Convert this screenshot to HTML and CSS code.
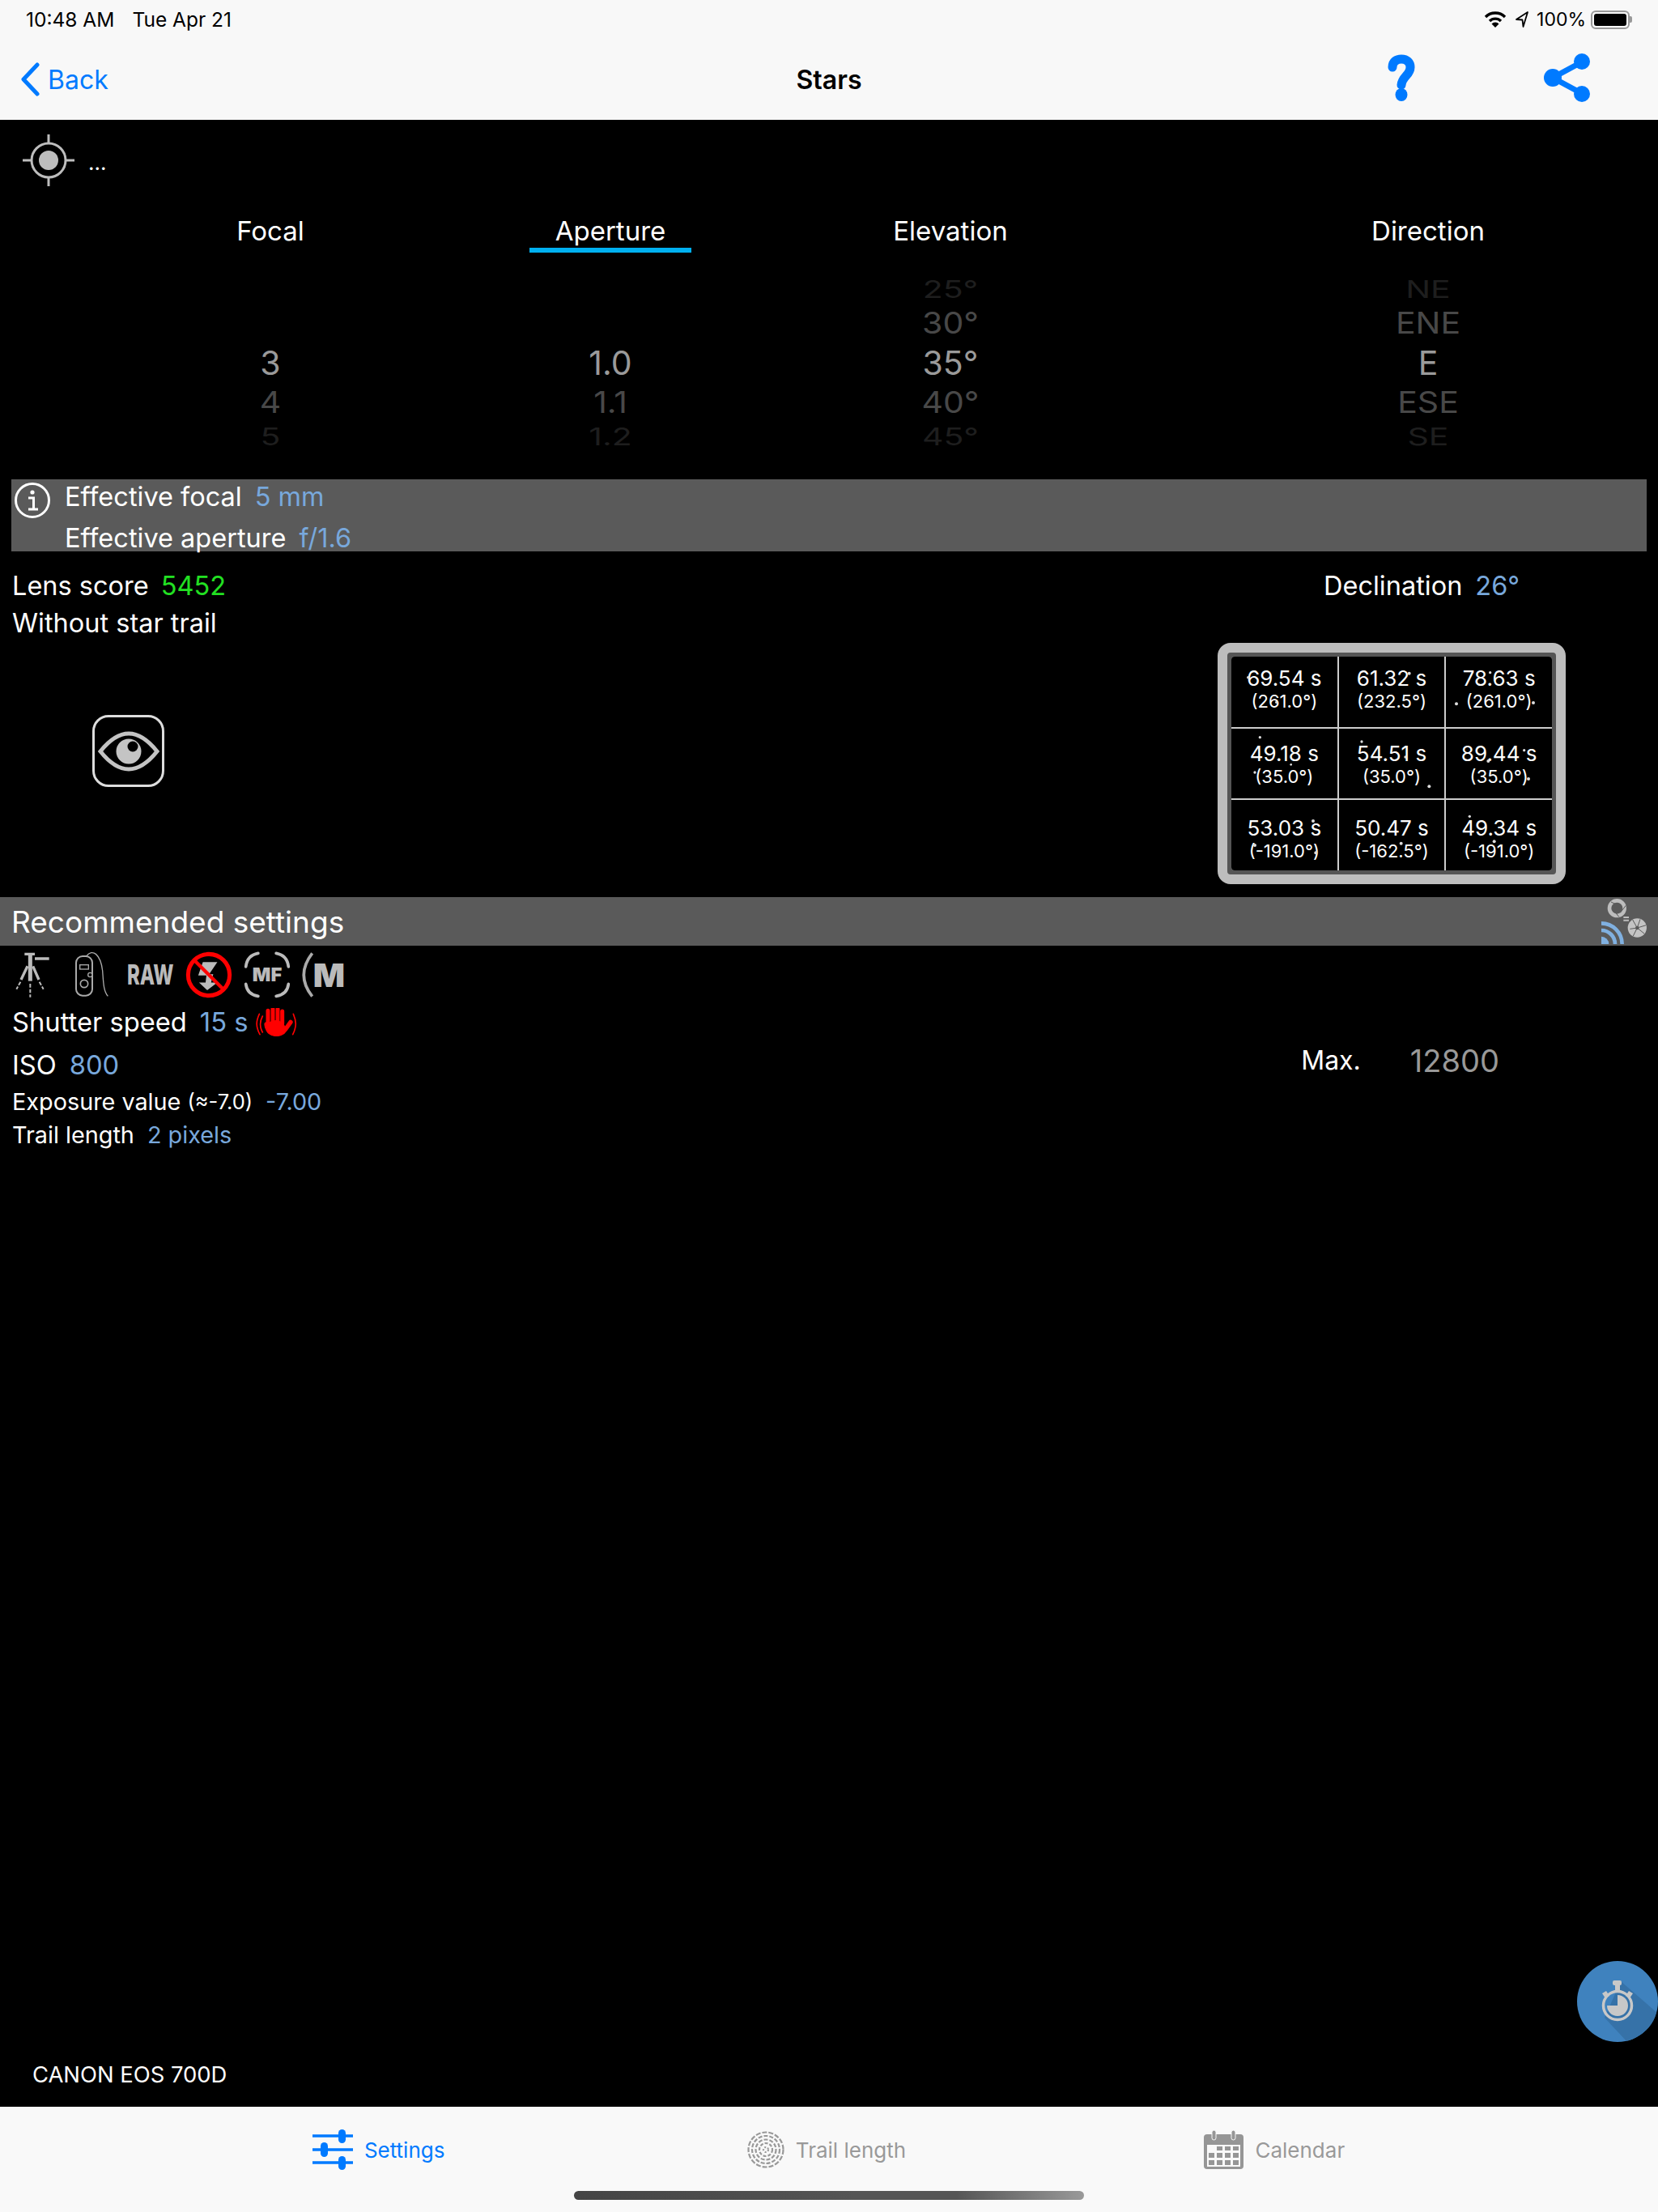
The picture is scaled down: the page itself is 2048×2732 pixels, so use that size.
FILE: index.html
```html
<!DOCTYPE html>
<html lang="en">
<head>
    <meta charset="UTF-8">
    <meta name="viewport" content="width=device-width, initial-scale=1.0">
    <title>Stars</title>
    <link rel="stylesheet" href="styles.css">
</head>
<body>
    <header class="top-bars">
        <div class="status-bar">
            <span class="status-time">10:48 AM</span>
            <span class="status-date">Tue Apr 21</span>
            <svg class="status-wifi" width="28" height="22" viewBox="0 0 28 22">
                <path d="M2 8 A17 17 0 0 1 26 8" fill="none" stroke="#000" stroke-width="3.4"/>
                <path d="M7 13 A10 10 0 0 1 21 13" fill="none" stroke="#000" stroke-width="3.4"/>
                <path d="M14 21 L9.5 16.5 A6 6 0 0 1 18.5 16.5 Z" fill="#000"/>
            </svg>
            <svg class="status-arrow" width="18" height="22" viewBox="0 0 18 22">
                <path d="M16 2 L2 11 L9.5 11.5 L10.5 20 Z" fill="none" stroke="#000" stroke-width="1.8" stroke-linejoin="round"/>
            </svg>
            <span class="status-percent">100%</span>
            <div class="battery"><div class="battery-level"></div></div>
            <div class="battery-tip"></div>
        </div>
        <nav class="nav-bar">
            <a class="nav-back" href="#">
                <svg width="26" height="42" viewBox="0 0 26 42">
                    <path d="M22 3 L5 21 L22 39" fill="none" stroke="#007aff" stroke-width="5" stroke-linecap="round" stroke-linejoin="round"/>
                </svg>
                <span>Back</span>
            </a>
            <h1 class="nav-title">Stars</h1>
            <svg class="nav-help" width="36" height="58" viewBox="0 0 36 58">
                <path d="M7 16 C7 9 12 6 18 6 C25 6 29 10 29 16 C29 26 19 27 18 38" fill="none" stroke="#007aff" stroke-width="11" stroke-linecap="round"/>
                <ellipse cx="18" cy="50" rx="7.5" ry="8" fill="#007aff"/>
            </svg>
            <svg class="nav-share" width="58" height="60" viewBox="0 0 58 60">
                <path d="M48 10 L11 30 L48 50" fill="none" stroke="#007aff" stroke-width="7"/>
                <circle cx="47" cy="10" r="10" fill="#007aff"/>
                <circle cx="11" cy="30" r="11" fill="#007aff"/>
                <circle cx="47" cy="50" r="10" fill="#007aff"/>
            </svg>
        </nav>
    </header>

    <main class="content">
        <div class="location-row">
            <svg width="64" height="64" viewBox="0 0 64 64">
                <circle cx="32" cy="32" r="21" fill="none" stroke="#bdbdbd" stroke-width="3"/>
                <circle cx="32" cy="32" r="12" fill="#bdbdbd"/>
                <path d="M32 0 V10 M32 54 V64 M0 32 H10 M54 32 H64" stroke="#bdbdbd" stroke-width="3"/>
            </svg>
            <span class="location-name">...</span>
        </div>

        <div class="param-tabs">
            <div class="param-tab">Focal</div>
            <div class="param-tab param-tab-active">Aperture</div>
            <div class="param-tab">Elevation</div>
            <div class="param-tab">Direction</div>
        </div>

        <div class="wheels">
            <div class="wheel">
                <div class="wheel-item"></div>
                <div class="wheel-item"></div>
                <div class="wheel-item wheel-current">3</div>
                <div class="wheel-item wheel-near">4</div>
                <div class="wheel-item wheel-far">5</div>
            </div>
            <div class="wheel">
                <div class="wheel-item"></div>
                <div class="wheel-item"></div>
                <div class="wheel-item wheel-current">1.0</div>
                <div class="wheel-item wheel-near">1.1</div>
                <div class="wheel-item wheel-far">1.2</div>
            </div>
            <div class="wheel">
                <div class="wheel-item wheel-far">25°</div>
                <div class="wheel-item wheel-near">30°</div>
                <div class="wheel-item wheel-current">35°</div>
                <div class="wheel-item wheel-near">40°</div>
                <div class="wheel-item wheel-far">45°</div>
            </div>
            <div class="wheel">
                <div class="wheel-item wheel-far">NE</div>
                <div class="wheel-item wheel-near">ENE</div>
                <div class="wheel-item wheel-current">E</div>
                <div class="wheel-item wheel-near">ESE</div>
                <div class="wheel-item wheel-far">SE</div>
            </div>
        </div>

        <section class="effective-bar">
            <svg class="effective-icon" width="46" height="46" viewBox="0 0 46 46">
                <circle cx="23" cy="23" r="20.5" fill="none" stroke="#fff" stroke-width="3"/>
                <circle cx="23" cy="13" r="2.6" fill="#fff"/>
                <path d="M18 20 H24.5 V33 M18 34 H30" fill="none" stroke="#fff" stroke-width="3"/>
            </svg>
            <div class="effective-lines">
                <div class="effective-line">Effective focal<span class="value">5 mm</span></div>
                <div class="effective-line">Effective aperture<span class="value">f/1.6</span></div>
            </div>
        </section>

        <section class="results">
            <div class="results-left">
                <div class="result-line">Lens score<span class="value value-good">5452</span></div>
                <div class="result-line">Without star trail</div>
                <button class="eye-button">
                    <svg width="83" height="83" viewBox="3 3 83 83">
                        <path d="M10 45 C22 30 33 23 45 23 C57 23 68 30 80 45 C68 60 57 67 45 67 C33 67 22 60 10 45 Z" fill="none" stroke="#c4c4c4" stroke-width="5"/>
                        <circle cx="45" cy="45" r="15.5" fill="#c4c4c4"/>
                        <circle cx="50" cy="39" r="6.5" fill="#000"/>
                    </svg>
                </button>
            </div>
            <div class="results-right">
                <div class="result-line declination">Declination<span class="value">26°</span></div>
                <div class="exposure-frame">
                    <div class="exposure-grid">
                        <div class="exposure-cell"><b>69.54 s</b><small>(261.0°)</small></div>
                        <div class="exposure-cell"><b>61.32 s</b><small>(232.5°)</small></div>
                        <div class="exposure-cell"><b>78.63 s</b><small>(261.0°)</small></div>
                        <div class="exposure-cell"><b>49.18 s</b><small>(35.0°)</small></div>
                        <div class="exposure-cell"><b>54.51 s</b><small>(35.0°)</small></div>
                        <div class="exposure-cell"><b>89.44 s</b><small>(35.0°)</small></div>
                        <div class="exposure-cell"><b>53.03 s</b><small>(-191.0°)</small></div>
                        <div class="exposure-cell"><b>50.47 s</b><small>(-162.5°)</small></div>
                        <div class="exposure-cell"><b>49.34 s</b><small>(-191.0°)</small></div>
                    </div>
                    <!-- stars showing through the grid -->
                    <svg class="exposure-stars" viewBox="72 42 1290 894" fill="#ddd">
                        <circle cx="185" cy="170" r="5"/><circle cx="290" cy="262" r="5"/>
                        <circle cx="782" cy="155" r="6"/><circle cx="1082" cy="152" r="5"/>
                        <circle cx="957" cy="268" r="6"/><circle cx="1242" cy="264" r="6"/>
                        <circle cx="229" cy="392" r="5"/><circle cx="606" cy="408" r="5"/>
                        <circle cx="344" cy="493" r="4"/><circle cx="210" cy="522" r="5"/>
                        <circle cx="768" cy="465" r="5"/><circle cx="856" cy="574" r="6"/>
                        <circle cx="1208" cy="440" r="5"/><circle cx="1075" cy="480" r="6"/>
                        <circle cx="1224" cy="546" r="6"/><circle cx="426" cy="702" r="6"/>
                        <circle cx="210" cy="792" r="6"/><circle cx="436" cy="820" r="6"/>
                        <circle cx="636" cy="715" r="4"/><circle cx="752" cy="785" r="6"/>
                        <circle cx="1006" cy="685" r="5"/><circle cx="1097" cy="778" r="6"/>
                    </svg>
                </div>
            </div>
        </section>

        <section class="settings-header">
            <h2>Recommended settings</h2>
            <svg class="settings-status" width="70" height="60" viewBox="234 54 210 180">
                <circle cx="292" cy="95" r="28" fill="none" stroke="#bdbdbd" stroke-width="14"/>
                <path d="M270 72 L300 86 M325 85 L304 112 M300 128 L276 98" stroke="#5a5a5a" stroke-width="3"/>
                <path d="M316 129 H336 M316 140 H336" stroke="#bdbdbd" stroke-width="6"/>
                <circle cx="367" cy="168" r="35" fill="#c4c4c4"/>
                <path d="M367 168 L350 138 M367 168 L400 158 M367 168 L352 198 M367 168 L394 190 M367 168 L340 172 M367 168 L378 136" stroke="#5a5a5a" stroke-width="3"/>
                <circle cx="367" cy="168" r="7" fill="#5a5a5a"/>
                <path d="M234 228 V200 A28 28 0 0 1 262 228 Z" fill="#80b0e0"/>
                <path d="M234 177 A51 51 0 0 1 285 228 M234 151 A77 77 0 0 1 311 228" fill="none" stroke="#80b0e0" stroke-width="14"/>
            </svg>
        </section>

        <div class="mode-icons">
            <svg width="45" height="58" viewBox="60 225 135 174">
                <path d="M97 235 H135 M135 252 H188" stroke="#bbb" stroke-width="10"/>
                <path d="M118 238 V335" stroke="#bbb" stroke-width="15"/>
                <path d="M108 280 L84 330 M128 280 L150 330" stroke="#bbb" stroke-width="10"/>
                <path d="M82 338 L67 365 M152 338 L167 365 M118 345 V395" stroke="#bbb" stroke-width="6" stroke-dasharray="14 6"/>
            </svg>
            <svg class="mode-remote" width="44" height="57" viewBox="275 228 132 171">
                <rect x="284" y="246" width="60" height="146" rx="24" fill="none" stroke="#aaa" stroke-width="6"/>
                <rect x="298" y="278" width="32" height="16" fill="none" stroke="#aaa" stroke-width="4"/>
                <circle cx="314" cy="348" r="14" fill="none" stroke="#aaa" stroke-width="5"/>
                <circle cx="336" cy="315" r="8" fill="#000" stroke="#aaa" stroke-width="4"/>
                <path d="M322 246 C345 215 375 240 382 300 C385 340 385 375 402 394" fill="none" stroke="#aaa" stroke-width="4"/>
            </svg>
            <span class="raw-label">RAW</span>
            <svg width="58" height="58" viewBox="688 226 172 172">
                <path d="M805 265 H752 L735 314 H765 L762 340 H738 L768 368 L805 340 H782 L790 310 H775 Z" fill="#bbb"/>
                <circle cx="774" cy="312" r="76" fill="none" stroke="#f00" stroke-width="15"/>
                <path d="M720 258 L828 366" stroke="#f00" stroke-width="13"/>
            </svg>
            <svg class="mode-focus" width="58" height="58" viewBox="904 226 172 172">
                <g fill="none" stroke="#bbb" stroke-width="11" stroke-linecap="round">
                    <path d="M912 282 C915 255 930 238 957 233"/>
                    <path d="M1023 233 C1050 238 1065 255 1068 282"/>
                    <path d="M912 346 C915 370 930 386 957 390"/>
                    <path d="M1023 390 C1050 386 1065 370 1068 346"/>
                </g>
                <text class="mode-text" x="990" y="336" text-anchor="middle" font-size="68" textLength="108" lengthAdjust="spacingAndGlyphs">MF</text>
            </svg>
            <svg class="mode-manual" width="54" height="58" viewBox="1118 226 162 172">
                <path d="M1156 232 C1115 285 1115 340 1156 392" fill="none" stroke="#aaa" stroke-width="11"/>
                <text class="mode-text" x="1218" y="357" text-anchor="middle" font-size="120" textLength="118" lengthAdjust="spacingAndGlyphs">M</text>
            </svg>
        </div>

        <section class="exposure-values">
            <div class="setting-line">Shutter speed<span class="value">15 s</span>
                <svg class="shake-icon" width="52" height="38" viewBox="0 0 156 114">
                    <g stroke="#f00" stroke-linecap="round" fill="none">
                        <path d="M48 10 V58 M66 4 V54 M84 4 V54 M101 12 V58" stroke-width="15"/>
                        <path d="M42 60 C45 100 95 108 112 80 L132 52" stroke-width="16"/>
                        <path d="M16 22 C3 50 3 70 18 98 M28 30 C17 50 17 70 28 90 M142 22 C154 50 154 70 140 98" stroke-width="5"/>
                    </g>
                    <ellipse cx="76" cy="75" rx="36" ry="30" fill="#f00"/>
                </svg>
            </div>
            <div class="setting-line setting-line-iso">ISO<span class="value">800</span>
                <div class="iso-max">Max.<span class="iso-max-value">12800</span></div>
            </div>
            <div class="setting-line setting-line-small">Exposure value<small class="approx">(≈-7.0)</small><span class="value">-7.00</span></div>
            <div class="setting-line setting-line-small setting-line-trail">Trail length<span class="value">2 pixels</span></div>
        </section>

        <div class="camera-name">CANON EOS 700D</div>

        <button class="timer-button">
            <svg width="100" height="100" viewBox="0 0 100 100">
                <path d="M54 25 L100 65 L100 100 L62 100 L34 70 Z" fill="#3672a8"/>
                <g fill="#c8c8c8">
                    <rect x="44" y="24" width="11" height="6" rx="2"/>
                    <rect x="47" y="30" width="6" height="7"/>
                    <path d="M31 40 L36 37 L40 43 L35 46 Z M69 40 L64 37 L60 43 L65 46 Z"/>
                    <path d="M50 42 A13 13 0 1 1 37 55 H50 Z"/>
                </g>
                <circle cx="50" cy="55" r="17.5" fill="none" stroke="#c8c8c8" stroke-width="3.5"/>
            </svg>
        </button>
    </main>

    <footer class="tab-bar">
        <div class="tabs">
            <a class="tab tab-active" href="#">
                <svg width="50" height="50" viewBox="0 0 50 50">
                    <path d="M0 8 H50 M0 25 H50 M0 41 H50" stroke="#007aff" stroke-width="3.5"/>
                    <rect x="32" y="0" width="9" height="17" rx="4.5" fill="#007aff"/>
                    <rect x="10" y="16" width="9" height="18" rx="4.5" fill="#007aff"/>
                    <rect x="32" y="33" width="9" height="17" rx="4.5" fill="#007aff"/>
                </svg>
                <span>Settings</span>
            </a>
            <a class="tab" href="#">
                <svg width="46" height="46" viewBox="0 0 46 46" fill="none" stroke="#999" stroke-width="2.2">
                    <circle cx="23" cy="23" r="21.5" stroke-dasharray="6 2"/>
                    <circle cx="23" cy="23" r="17" stroke-dasharray="5 2"/>
                    <circle cx="23" cy="23" r="12.5" stroke-dasharray="5 2"/>
                    <circle cx="23" cy="23" r="8" stroke-dasharray="4 2"/>
                    <circle cx="23" cy="23" r="3" stroke-dasharray="2 2"/>
                </svg>
                <span>Trail length</span>
            </a>
            <a class="tab" href="#">
                <svg width="49" height="48" viewBox="0 0 49 48">
                    <rect x="0" y="5" width="49" height="43" rx="4" fill="#969696"/>
                    <rect x="4" y="18" width="41" height="27" fill="#f9f9f9"/>
                    <rect x="10" y="0" width="5" height="12" rx="2.5" fill="#969696" stroke="#f9f9f9"/>
                    <rect x="34" y="0" width="5" height="12" rx="2.5" fill="#969696" stroke="#f9f9f9"/>
                    <g fill="#969696">
                        <rect x="16" y="20" width="7" height="5"/><rect x="26" y="20" width="7" height="5"/><rect x="36" y="20" width="7" height="5"/>
                        <rect x="6" y="28" width="7" height="6"/><rect x="16" y="28" width="7" height="6"/><rect x="26" y="28" width="7" height="6"/><rect x="36" y="28" width="7" height="6"/>
                        <rect x="6" y="37" width="7" height="6"/><rect x="16" y="37" width="7" height="6"/><rect x="26" y="37" width="7" height="6"/><rect x="36" y="37" width="7" height="6"/>
                    </g>
                </svg>
                <span>Calendar</span>
            </a>
        </div>
        <div class="home-indicator"></div>
    </footer>
</body>
</html>
```

FILE: styles.css
```css
* {
    box-sizing: border-box;
}

body {
    margin: 0;
    width: 2048px;
    height: 2732px;
    display: flex;
    flex-direction: column;
    overflow: hidden;
    background: #000;
    color: #fff;
    font-family: Inter, "Noto Sans", sans-serif;
}

/* top bars */
.top-bars {
    background: #f8f8f8;
    color: #000;
}

.status-bar {
    height: 48px;
    padding: 0 32px 0 32px;
    display: flex;
    align-items: center;
    font-size: 24.5px;
}

.status-date {
    margin-left: 22px;
    margin-right: auto;
}

.status-arrow {
    margin-left: 10px;
}

.status-percent {
    margin-left: 9px;
    font-size: 23px;
}

.battery {
    width: 48px;
    height: 23px;
    margin-left: 6px;
    padding: 2px;
    border: 2px solid #999;
    border-radius: 6px;
}

.battery-level {
    height: 100%;
    background: #000;
    border-radius: 3px;
}

.battery-tip {
    width: 3px;
    height: 8px;
    background: #999;
    border-radius: 0 2px 2px 0;
}

.nav-bar {
    height: 100px;
    display: flex;
    align-items: center;
    padding-left: 24px;
}

.nav-back {
    width: 939px;
    display: flex;
    align-items: center;
    gap: 9px;
    color: #007aff;
    font-size: 32px;
    text-decoration: none;
}

.nav-title {
    width: 122px;
    margin: 0;
    font-size: 32px;
    font-weight: 600;
    text-align: center;
}

.nav-help {
    margin-left: 628px;
    margin-top: -4px;
}

.nav-share {
    margin-left: 158px;
    margin-top: -4px;
}

/* main */
.content {
    position: relative;
    flex: 1;
    display: flex;
    flex-direction: column;
}

.location-row {
    height: 114px;
    padding: 18px 0 0 28px;
    display: flex;
    align-items: flex-start;
}

.location-name {
    margin: 19px 0 0 17px;
    font-size: 26px;
}

.param-tabs,
.wheels {
    display: grid;
    grid-template-columns: 640px 200px 640px 540px;
    padding-left: 14px;
}

.param-tab {
    height: 50px;
    font-size: 33px;
    line-height: 47px;
    text-align: center;
}

.param-tab-active {
    border-bottom: 6px solid #00b0f0;
}

.wheels {
    margin-top: 27px;
}

.wheel {
    display: grid;
    grid-template-rows: 36px 48px 50px 48px 36px;
}

.wheel-item {
    font-size: 41px;
    line-height: 1;
    display: flex;
    align-items: center;
    justify-content: center;
    color: #9a9a9a;
}

.wheel-near {
    color: #484848;
    transform: scaleY(0.9);
}

.wheel-far {
    color: #1e1e1e;
    transform: scaleY(0.72);
}

.effective-bar {
    height: 89px;
    margin: 35px 14px 0;
    padding-left: 3px;
    display: flex;
    background: #5a5a5a;
    font-size: 32.5px;
}

.effective-icon {
    margin: 3px 0 0 0;
}

.effective-lines {
    margin-left: 17px;
}

.effective-line {
    height: 50px;
    line-height: 44px;
}

.effective-line + .effective-line {
    height: 39px;
    line-height: 45px;
}

.value {
    margin-left: 16px;
    color: #78a8dc;
}

.value-good {
    margin-left: 15px;
    color: #22e022;
}

.results {
    height: 427px;
    display: flex;
    justify-content: space-between;
    padding: 19px 114px 0 15px;
}

.result-line {
    height: 46px;
    font-size: 32.5px;
    line-height: 47px;
}

.eye-button {
    display: block;
    width: 89px;
    height: 89px;
    margin: 91px 0 0 99px;
    padding: 0;
    background: #000;
    border: 3px solid #ddd;
    border-radius: 20px;
}

.eye-button svg {
    display: block;
}

.results-right {
    width: 430px;
}

.declination {
    padding-left: 131px;
    white-space: nowrap;
}

.exposure-frame {
    position: relative;
    height: 298px;
    margin-top: 48px;
    padding: 5px;
    background: #555;
    border: 12px solid #bdbdbd;
    border-radius: 16px;
}

.exposure-grid {
    height: 100%;
    display: grid;
    grid-template-columns: repeat(3, 1fr);
    grid-template-rows: repeat(3, 1fr);
    gap: 2px;
    background: #ccc;
    border-radius: 4px;
    overflow: hidden;
}

.exposure-cell {
    display: flex;
    flex-direction: column;
    align-items: center;
    justify-content: center;
    background: #000;
}

.exposure-cell:nth-child(-n+3) {
    padding-bottom: 4px;
}

.exposure-cell:nth-child(n+4) {
    padding-top: 4px;
}

.exposure-cell:nth-child(n+7) {
    padding-top: 10px;
}

.exposure-cell b {
    font-size: 26px;
    font-weight: 400;
    line-height: 28px;
}

.exposure-cell small {
    font-size: 22px;
    line-height: 28px;
}

.exposure-stars {
    position: absolute;
    top: -12px;
    left: -12px;
    width: 430px;
    height: 298px;
}

.settings-header {
    height: 60px;
    display: flex;
    justify-content: space-between;
    align-items: center;
    padding-left: 14px;
    background: #5a5a5a;
}

.settings-header h2 {
    margin: 0;
    font-size: 37px;
    font-weight: 400;
}

.mode-icons {
    height: 68px;
    padding: 7px 0 0 18px;
    display: flex;
    align-items: flex-start;
    gap: 0;
}

.mode-icons svg + svg {
    margin-left: 16px;
}

.mode-icons .mode-remote {
    margin-left: 28px;
}

.mode-icons .mode-focus {
    margin-left: 14px;
}

.mode-icons .mode-manual {
    margin-left: 14px;
}

.mode-icons .raw-label + svg {
    margin-left: 16px;
}

.raw-label {
    width: 56px;
    margin: 11px 0 0 22px;
    font-size: 34px;
    font-weight: 800;
    line-height: 36px;
    color: #bbb;
    transform: scaleX(0.7);
    transform-origin: left;
}

.mode-text {
    fill: #bbb;
    font-weight: 900;
    font-family: Inter, sans-serif;
}

.exposure-values {
    padding-left: 15px;
}

.setting-line {
    height: 52px;
    display: flex;
    align-items: center;
    font-size: 32.7px;
}

.shake-icon {
    margin: 4px 0 0 9px;
}

.setting-line-iso {
    height: 53px;
}

.iso-max {
    margin: -10px 0 0 1460px;
    display: flex;
    align-items: center;
    font-size: 32px;
}

.iso-max-value {
    margin-left: 61px;
    color: #999;
    font-size: 38px;
}

.setting-line-small {
    height: 38px;
    font-size: 28.8px;
}

.setting-line-trail {
    height: 45px;
}

.approx {
    margin-left: 8px;
    font-size: 25.5px;
}

.camera-name {
    margin: auto 0 23px 40px;
    font-size: 27.4px;
}

.timer-button {
    position: absolute;
    right: 0;
    bottom: 80px;
    width: 100px;
    height: 100px;
    padding: 0;
    overflow: hidden;
    background: #3f82be;
    border: 0;
    border-radius: 50%;
}

.timer-button svg {
    display: block;
}

/* tab bar */
.tab-bar {
    height: 130px;
    background: #f9f9f9;
}

.tabs {
    height: 104px;
    padding: 2px 197px 0 191px;
    display: grid;
    grid-template-columns: repeat(3, 1fr);
}

.tab {
    display: flex;
    align-items: center;
    justify-content: center;
    gap: 14px;
    color: #999;
    font-size: 26px;
    text-decoration: none;
}

.tab-active {
    color: #007aff;
}

.home-indicator {
    width: 630px;
    height: 11px;
    margin-left: 709px;
    border-radius: 6px;
    background: linear-gradient(to right, #444, #555 55%, #555 75%, #999);
}
```
